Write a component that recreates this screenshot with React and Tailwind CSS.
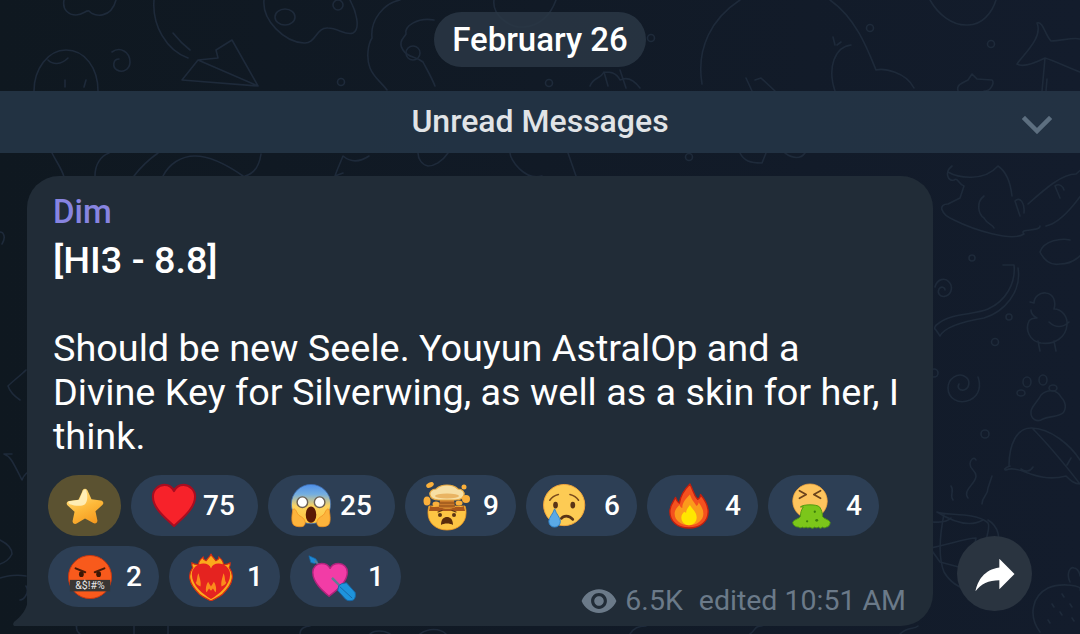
import React from "react";

function Doodles() {
  return (
    <svg className="absolute inset-0" width="1080" height="634" viewBox="0 0 1080 634" fill="none" stroke="#1e2a3a" strokeWidth="1.6" strokeLinecap="round" strokeLinejoin="round">
      {/* left and top */}
      <path d="M64 0c-2 10 5 15 12 15 7 0 10-5 13 -4 5 6 22 8 27-11" />
      <path d="M154 0c-2 25 12 50 34 58M173 33c4 5 8 10 17 17" />
      <path d="M182 80l16-20 20 -2-2-8 16-10 26 46zM198 60l60 26" />
      <path d="M264 0c-2 20 20 42 40 43 12 1 12-16 24-15 10 0 18 8 25 5 8-4 3-22-3-33" />
      <ellipse cx="285" cy="17" rx="10" ry="8" />
      <circle cx="338" cy="5" r="5" />
      <path d="M34 91c0-22 14-41 32-41 19 0 32 18 32 41M48 60c5 5 13 5 20-2M65 80v7M86 80l-2 7" />
      <path d="M112 52c8-6 18 0 18 10 0 8-8 11-13 8-5-3-4-11 2-11" />
      <circle cx="341" cy="82" r="3.5" />
      <path d="M400 0c-16 3-30 20-28 38 -4 6-6 20-2 30 4 10 12 15 17 22" />
      <path d="M434 20c-16-3-30 6-28 14 -3 5-8 8-3 16 5 8 12 6 20 12 3 6 8 14 12 24" />
      <circle cx="413" cy="53" r="7" />
      <path d="M494 0c-2 14 14 28 30 27 14-1 26-10 32-27" />
      <circle cx="549" cy="83" r="3.5" />
      <path d="M590 86c4-10 10-6 14-14 6 0 12 0 16 8 8-4 14 0 20 8M604 72l4 14M620 70l6 18" />
      <circle cx="651" cy="38" r="3.5" />
      {/* right top */}
      <path d="M740 0c-28 18-44 48-38 84M830 0c26 18 38 50 46 70 8-2 30 2 38 18" />
      <path d="M835 91c-8-24 0-44 16-46M835 45l-2-8M837 45l4-3M752 91l-6-13M775 91l-14-13-6 2" />
      <circle cx="870" cy="28" r="3.5" />
      <circle cx="991" cy="44" r="3.5" />
      <path d="M930 0c8 14 22 26 38 25 14 0 24-12 28-25" />
      <path d="M958 91c-2-6 4-8 10-11l4-6 5 5 15 1c3 3-2 12-8 11" />
      <path d="M1037 23c6 14-12 30-20 41 6 4 20-2 28-6l-3 33M1037 23c6-2 8 12 14 18 10 0 22-4 29-2M1045 58c10 3 24 10 35 14M1046 91l1-12" />
      {/* under the bar */}
      <path d="M52 153c5 10 10 16 12 24M95 176c0-12 6-20 14-23M134 176c6-8 14-16 24-23M163 176c6-12 18-20 32-20 14 0 28 6 48 20M245 176c8-2 14-8 16-22" />
      <path d="M335 176c2-6 4-10 8-20 6 5 14 8 26 0M335 176l8-3" />
      <path d="M418 153c0 6 4 12 10 13 6 0 14-4 20-13M510 153c0 6 14 28 32 23M568 153l8 23M740 153c4 8 10 10 22 10l4-10M785 153c8 6 16 6 20 0" />
      <circle cx="689" cy="157" r="3.5" />
      {/* right column */}
      <path d="M952 166c-8 6-4 16 2 14 4-3 4 4 10 6l-4 12-12 6c-10 0-8 10 6 16 20 10 58 22 70 14-6-6 16-2 16-8" />
      <path d="M948 172c10 6 36 10 50-6 6 4 12 12 14 30M984 196c-8 6-6 18 0 22 3 6 8 6 10 10" />
      <path d="M1046 226c18-4 36-30 58-66 -8-6-16 4-28 14-14 0-30 14-48 30" />
      <path d="M1070 240c-8-2-26 0-30 12 4 8 10 14 20 12 14 0 24-10 26-18M1060 198l-5-12c4-3 8 0 9 4M1020 216l-5-15c5-5 10 2 9 12" />
      <circle cx="972" cy="258" r="3" />
      <path d="M935 287c2-8 10-10 14-5 4 4 3 12-3 14-6 2-9-3-7-7 2-3 6-2 6 1" />
      <path d="M1003 265c4 0 6 0 11 0 2 18-8 36-26 44-14 6-36 4-49 14 -5 3-5 6-3 7l4 6c4-8 20-14 44-18 20-6 38-26 34-50" />
      <path d="M1030 302l4 1c0-6 6-11 12-10 8 1 10 9 8 16 8 0 14 8 13 16-1 12-12 20-26 18-12-2-16-14-12-22 2-3 5-3 8-3 -4-2-6-4-6-8M1038 341l2 10M1054 341l2 10M1049 322c6 6 14 6 20 0" />
      <circle cx="1009" cy="317" r="3" />
      <circle cx="995" cy="342" r="3.5" />
      <circle cx="934" cy="373" r="4" />
      <path d="M978 377c3 8 2 18-8 23-12 5-22-2-22-12 0-10 10-15 16-12 7 3 6 12 0 14-5 1-7-3-5-6" />
      <path d="M1041 395c6-6 16-6 20 2 6 6 6 16-2 18-6 2-12 2-16 4-6 4-12 0-12-6-1-6 6-10 10-18z" />
      <ellipse cx="1027" cy="382" rx="4" ry="5" />
      <ellipse cx="1043" cy="380" rx="4" ry="5" />
      <ellipse cx="1053" cy="388" rx="4" ry="3" />
      <ellipse cx="1021" cy="393" rx="4" ry="3" />
      <circle cx="985" cy="434" r="4" />
      <path d="M1009 466c0-22 8-38 22-38 20 0 40 18 49 32M1010 466c-6 2-6 4-4 4 14-6 30 14 60 6 4 4 8 8 14 8M1021 469c4 3 9 3 12-2M1032 428c14 14 34 38 48 56M1067 465l4-7" />
      <path d="M953 500c-4-6 2-8-2-14M968 498c-6-8 8-14 8-22 0-6-6-6-6-12 0-4 4-8 6-4M982 504c0-8 6-8 6-16l4-12" />
      <path d="M937 512c10 4 36 0 50 10 4 2 0 14-4 30M937 512c16 10 32 16 46 8M988 520c10 6 14 18 8 34M944 514c-6 30-4 48 0 58 6 10 14 16 26 18" />
      <path d="M913 520c10 0 30 6 38 -2M930 548c14-2 36-10 46-10l-6 32-30 -8z" />
      <path d="M1040 632c-12-16-8-36 8-44 14-6 36-2 32 2M1070 582c-4-8 0-16 4-14 4 0 6 6 6 8" />
      <path d="M1052 604l2 3M1062 594l2 3M1060 612l2 3M1070 604l2 3M1048 620l2 3M1072 618l2 3" />
      <circle cx="995" cy="596" r="4" />
      {/* bottom and left edge */}
      <path d="M20 400c-6-4-10-8-12-14 6-6 12-10 18-16M4 454c6 2 8 6 18 26 2-6 6-8 10-10M4 454h8M0 540c8 4 12 8 12 14-2 4-6 8-12 10M0 578c8-2 16-4 26-2" />
      <path d="M80 634c-6-4-2-8-4-8M134 634v-8M168 634v-8M300 634c0-6 6-8 10-8M370 634c4-4 14-4 20 0M420 634c8-6 20-6 26 0M630 634c4-6 8-8 16-8M750 634c6-4 4-8 12-8M900 634c8-8 14-4 18-8" />
      <path d="M0 232c4 0 6 6 2 12M20 600c4 0 10-8 6-14" />
    </svg>
  );
}

function Star() {
  return (
    <svg viewBox="0 0 48 48" className="w-[46px] h-[46px]">
      <defs>
        <linearGradient id="starFill" x1="0.2" y1="0" x2="0.7" y2="1">
          <stop offset="0" stopColor="#ffe48a" />
          <stop offset="0.55" stopColor="#fdb93a" />
          <stop offset="1" stopColor="#f59a1f" />
        </linearGradient>
      </defs>
      <path d="M24 6c1.500 0 2.500 1 3 2.500l3.800 8.500 9.700 1.200c2.700.4 3.500 3 1.600 4.800l-7.200 6.500 2 9.300c.5 2.500-2 4.200-4.200 3L24 37l-8.700 5.300c-2.200 1.200-4.700-.5-4.200-3l2-9.300-7.200-6.500c-1.900-1.800-1.100-4.400 1.600-4.800l9.700-1.200 3.800-8.500C21.500 7 22.500 6 24 6z" fill="url(#starFill)" />
      <path d="M24 7c-1 0-2 1-2.500 2L18 17.500l-10.500 1.600c-1.500.5-1 2 .5 3 5 1.500 12 3 16 0 3-3 3-9 1-15z" fill="#fff3c4" opacity="0.85" />
    </svg>
  );
}

function Heart() {
  return (
    <svg viewBox="0 0 48 48" className="w-[46px] h-[46px]">
      <path d="M24 45C16 37 2 27 2 14 2 7 8 2 14 2c4.500 0 8 2 10 6.500C26 4 29.500 2 34 2c6 0 12 5 12 12 0 13-14 23-22 31z" fill="#f7222a" stroke="#a80d20" strokeWidth="2.200" strokeLinejoin="round" />
    </svg>
  );
}

function Scream() {
  return (
    <svg viewBox="0 0 48 48" className="w-[46px] h-[46px]">
      <defs>
        <linearGradient id="screamFace" x1="0" y1="0" x2="0" y2="1">
          <stop offset="0" stopColor="#4f8fe8" />
          <stop offset="0.25" stopColor="#74aee0" />
          <stop offset="0.55" stopColor="#fdd35e" />
          <stop offset="1" stopColor="#fdc43c" />
        </linearGradient>
      </defs>
      <circle cx="24" cy="22" r="20.500" fill="url(#screamFace)" stroke="#3f6fb5" strokeWidth="0.800" />
      <circle cx="15" cy="20" r="5.500" fill="#fff" stroke="#6d6154" strokeWidth="1.500" />
      <circle cx="33" cy="20" r="5.500" fill="#fff" stroke="#6d6154" strokeWidth="1.500" />
      <ellipse cx="24" cy="33" rx="5.500" ry="8.500" fill="#5a1a05" />
      <path d="M5 28c-1 6-2 13 1 16 3 2 8 2 10 1 3-2 2-6 0-8-3-3-4-2-6-5-1-2-3-7-5-4z" fill="#fdb43c" stroke="#f08e1f" strokeWidth="0.800" />
      <path d="M43 28c1 6 2 13-1 16-3 2-8 2-10 1-3-2-2-6 0-8 3-3 4-2 6-5 1-2 3-7 5-4z" fill="#fdb43c" stroke="#f08e1f" strokeWidth="0.800" />
    </svg>
  );
}

function Exploding() {
  return (
    <svg viewBox="0 0 52 50" className="w-[52px] h-[50px]">
      <path d="M8 25c-1 3-1 6-1 7 0 10 8 17 19 17s19-7 19-17c0-2 0-4-1-7z" fill="#fdc544" stroke="#f59a1f" strokeWidth="0.800" />
      <path d="M9 25c4 2 8 0 10 1 3 2 12 2 15 0 3-1 6 1 9-1l1 5H8z" fill="#a8561b" />
      <path d="M19 19h14l1 8H18z" fill="#c9792a" />
      <path d="M18 22h16M18 25h16" stroke="#8a4a16" strokeWidth="1.200" />
      <path d="M26 4c-6 0-9 2-11 4-4 0-7 3-6 6 1 4 6 5 9 5h16c3 0 8-1 9-5 1-3-2-6-6-6-2-2-5-4-11-4z" fill="#f7dfa4" stroke="#e8a940" strokeWidth="1.200" />
      <ellipse cx="26" cy="15" rx="12" ry="2.500" fill="#e9b463" />
      <ellipse cx="6" cy="20" rx="3.500" ry="4.500" fill="#fbb03b" />
      <ellipse cx="15" cy="23" rx="3.500" ry="2.500" fill="#fbb03b" />
      <ellipse cx="45" cy="18" rx="4" ry="4" fill="#fbb03b" />
      <ellipse cx="38" cy="22" rx="3.500" ry="2.500" fill="#fbb03b" />
      <ellipse cx="9" cy="4" rx="4" ry="2.500" fill="#fbb03b" transform="rotate(-25 9 4)" />
      <circle cx="43" cy="6" r="2.500" fill="#fbb03b" />
      <circle cx="19" cy="34" r="2" fill="#5a3416" />
      <circle cx="33" cy="34" r="2" fill="#5a3416" />
      <path d="M17 31l4-1.500M35 31l-4-1.500" stroke="#5a3416" strokeWidth="1.200" strokeLinecap="round" />
      <path d="M20 44c0-6 3-8 6-8s6 2 6 8c-3-2-9-2-12 0z" fill="#5a2c0c" />
    </svg>
  );
}

function Crying() {
  return (
    <svg viewBox="4 0 48 48" className="w-[46px] h-[46px] overflow-visible">
      <circle cx="24" cy="23" r="21.500" fill="#fdcb54" stroke="#f2a33a" strokeWidth="1" />
      <path d="M9 18c2-3 5-5 9-6M39 18c-2-3-5-5-9-6" stroke="#7a4a1c" strokeWidth="1.600" fill="none" strokeLinecap="round" />
      <ellipse cx="15" cy="23" rx="2.500" ry="3.500" fill="#5a3416" />
      <ellipse cx="33" cy="23" rx="2.500" ry="3.500" fill="#5a3416" />
      <path d="M21 37c2-3 8-4 12 1" stroke="#5a3416" strokeWidth="2.800" fill="none" strokeLinecap="round" />
      <path d="M14 27c-2 6-6 9-6 13 0 4 3 6 6 6s6-2 6-6c0-4-4-7-6-13z" fill="#5aa9e6" stroke="#2f82c8" strokeWidth="1" />
    </svg>
  );
}

function Fire() {
  return (
    <svg viewBox="0 0 48 48" className="w-[46px] h-[46px]">
      <path d="M25 1c4 8 4 12 8 16 2-1 3-3 3-5 5 6 8 12 8 18 0 10-8 17-20 17S4 40 4 30c0-7 4-11 6-15 1 3 2 5 4 6 1-8 5-14 11-20z" fill="#f4511e" stroke="#c41e0e" strokeWidth="1.400" strokeLinejoin="round" />
      <path d="M25 12c2 6 5 9 7 12 1-1 2-2 2-4 3 4 5 8 5 12 0 7-7 12-15 12S9 39 9 32c0-4 3-7 5-9 1 2 2 3 3 3 0-6 4-10 8-14z" fill="#fb9a1c" />
      <path d="M25 23c2 4 7 7 7 13 0 5-4 8-8 8s-8-3-8-8c0-3 2-5 3-6 1 1 2 1 2 1 0-3 2-5 4-8z" fill="#ffe600" />
    </svg>
  );
}

function Vomit() {
  return (
    <svg viewBox="0 0 48 50" className="w-[46px] h-[48px]">
      <circle cx="24" cy="20" r="18" fill="#fdc45e" stroke="#f2a33a" strokeWidth="0.800" />
      <path d="M13 9l7 4-7 4M35 9l-7 4 7 4" stroke="#6b431c" strokeWidth="1.800" fill="none" strokeLinecap="round" strokeLinejoin="round" />
      <path d="M14 26c3-3 17-3 20 0 2 3 3 6 3 10 2 3 7 3 8 6 0 3-2 5-4 5-1 1-3 1-4 0-2 2-3 1-4 0-2 1-3 1-4 0-2 2-4 1-5 0-2 1-3 1-4 0-2 1-3 1-4 0-1 1-3 1-4 0-3 0-6-2-6-5 1-3 6-3 8-6 0-4 1-7 3-10z" fill="#7cc61a" stroke="#4f9a10" strokeWidth="1" strokeLinejoin="round" />
      <circle cx="29" cy="31" r="1.200" fill="#3c7d0c" />
      <circle cx="21" cy="41" r="1.200" fill="#3c7d0c" />
      <circle cx="31" cy="40" r="1.500" fill="#3c7d0c" />
    </svg>
  );
}

function Cursing() {
  return (
    <svg viewBox="0 0 48 48" className="w-[46px] h-[46px]">
      <circle cx="24" cy="24" r="22.500" fill="#f85a1c" stroke="#c9360f" strokeWidth="1" />
      <path d="M9 15l10 4M39 15l-10 4" stroke="#4a1c08" strokeWidth="2.200" strokeLinecap="round" />
      <ellipse cx="15" cy="21" rx="2.500" ry="3" fill="#3c1604" />
      <ellipse cx="33" cy="21" rx="2.500" ry="3" fill="#3c1604" />
      <rect x="3" y="27" width="42" height="12" fill="#3a3633" />
      <text x="24" y="37" textAnchor="middle" fontSize="11" fill="#e8e8e8" fontFamily="Roboto, sans-serif">&amp;$!#%</text>
    </svg>
  );
}

function FireHeart() {
  return (
    <svg viewBox="0 0 48 50" className="w-[46px] h-[48px]">
      <path d="M24 1c1 3 3 4 5 7 2-1 4-2 3-4 4 3 5 6 5 8 3 0 5 0 7-2 0 2 0 4-1 5 2 3 4 8 3 12-1 7-6 12-10 16-4 3-8 5-12 7-4-2-8-4-12-7-4-4-9-9-10-16-1-4 1-9 3-12-1-1-1-3-1-5 2 2 4 2 7 2 0-2 1-5 5-8-1 2 1 3 3 4 2-3 4-4 5-7z" fill="#fbaa1c" stroke="#d62c12" strokeWidth="1.200" strokeLinejoin="round" />
      <path d="M24 48C16 43 4 34 4 22c0-6 6-11 12-11 4 0 7 2 8 5 1-3 4-5 8-5 6 0 12 5 12 11 0 12-12 21-20 26z" fill="#e52320" />
      <path d="M8 31c2-2 1-7 3-10 1 5 3 9 2 14-2-1-4-2-5-4zM40 31c-2-2-1-7-3-10-1 5-3 9-2 14 2-1 4-2 5-4zM19 41c-1-4 0-8 2-11 1 2 2 3 3 5 1-2 2-3 3-5 2 3 3 7 2 11-1 0-2-3-3-4-1 1-1 2-2 2-1 0-1-1-2-2-1 1-2 4-3 4z" fill="#fb8c1c" />
    </svg>
  );
}

function ArrowHeart() {
  return (
    <svg viewBox="0 0 52 52" className="w-[50px] h-[50px]">
      <path d="M9 7l-7-3 2 7 4 1 3-2z" fill="#1e88d6" stroke="#1668a8" strokeWidth="0.800" />
      <path d="M8 9l7 7" stroke="#5b7f95" strokeWidth="2" />
      <path d="M23 46C17 41 6 32 6 21c0-5 4-9 9-9 4 0 7 1 9 5 2-4 5-5 9-5 5 0 9 4 9 9 0 11-13 20-19 25z" fill="#f23ca6" stroke="#b0227c" strokeWidth="1.500" strokeLinejoin="round" />
      <path d="M26 27l12 12" stroke="#5b7f95" strokeWidth="2.500" />
      <path d="M36 33l5-1 9 10c1 3 0 7-2 8-3 1-6 1-8-1l-8-9 1-5z" fill="#1e94dc" stroke="#1668a8" strokeWidth="1" strokeLinejoin="round" />
      <path d="M34 36l13 12" stroke="#1668a8" strokeWidth="1" />
    </svg>
  );
}

function Reaction({ icon, count, wide }) {
  return (
    <div className={wide ? "flex items-center h-[61px] w-[127px] rounded-full bg-[#2d3f55] pl-[20px]" : "flex items-center h-[61px] w-[111px] rounded-full bg-[#2d3f55]"}>
      <div className={wide ? "flex w-[46px] justify-center" : "flex w-[78px] justify-center pl-[6px]"}>{icon}</div>
      <span className={wide ? "ml-[6px] text-[28px] font-medium text-white" : "text-[28px] font-medium text-white"}>{count}</span>
    </div>
  );
}

export default function App() {
  return (
    <div className="relative flex h-[634px] w-[1080px] flex-col overflow-hidden bg-linear-to-r from-[#0f1820] to-[#131c2c] pt-3 font-['Roboto',sans-serif]">
      <Doodles />

      <div className="relative flex h-[55px] w-[212px] items-center justify-center self-center rounded-full bg-[#2a3745]/85 text-[33px] font-medium text-white">
        February 26
      </div>

      <div className="relative mt-6 flex h-[62px] items-center justify-center bg-[#243444]/95 pb-[2px] text-[32px] font-medium text-[#e1e4e7]">
        Unread Messages
        <svg className="absolute right-[28px] top-[25px]" width="30" height="18" viewBox="0 0 30 18" fill="none" stroke="#5d6f80" strokeWidth="4.500" strokeLinecap="square">
          <path d="M3 3l12 12L27 3" />
        </svg>
      </div>

      <div className="relative mt-[23px] flex items-end pl-[27px]">
        <div className="relative h-[450px] w-[906px] rounded-[32px] rounded-bl-none bg-[#212c37] pl-[21px] pt-[17px]">
          <svg className="absolute bottom-0 left-[-14px]" width="15" height="30" viewBox="0 0 15 30" fill="#212c37">
            <path d="M15 0v30H2C0 30-.5 28 1 26 8 20 15 14 15 0z" />
          </svg>

          <div className="pl-[5px] text-[33px] font-medium leading-[38px] text-[#8784e0]">Dim</div>
          <div className="mt-[7px] pl-[5px] text-[37.8px] leading-[44px] text-white">
            <span className="font-medium">[HI3 - 8.8]</span>
            <br />
            <br />
            Should be new Seele. Youyun AstralOp and a
            <br />
            Divine Key for Silverwing, as well as a skin for her, I
            <br />
            think.
          </div>

          <div className="mt-[17px] flex gap-[10px]">
            <div className="flex h-[61px] w-[73px] items-center justify-center rounded-full bg-[#5b5231]">
              <Star />
            </div>
            <Reaction wide icon={<Heart />} count="75" />
            <Reaction wide icon={<Scream />} count="25" />
            <Reaction icon={<Exploding />} count="9" />
            <Reaction icon={<Crying />} count="6" />
            <Reaction icon={<Fire />} count="4" />
            <Reaction icon={<Vomit />} count="4" />
          </div>

          <div className="mt-[10px] flex items-end gap-[10px] pr-[27px]">
            <Reaction icon={<Cursing />} count="2" />
            <Reaction icon={<FireHeart />} count="1" />
            <Reaction icon={<ArrowHeart />} count="1" />
            <div className="ml-auto mb-[-13px] flex items-center text-[28.5px] leading-[36px] text-[#6b7a89]">
              <svg className="mr-[7px] h-[38px] w-[38px]" viewBox="0 0 24 24" fill="#6b7a89">
                <path d="M12 4.500C7 4.500 2.730 7.610 1 12c1.730 4.390 6 7.500 11 7.500s9.270-3.110 11-7.500c-1.730-4.390-6-7.500-11-7.500zM12 17c-2.760 0-5-2.240-5-5s2.240-5 5-5 5 2.240 5 5-2.240 5-5 5zm0-8c-1.660 0-3 1.340-3 3s1.340 3 3 3 3-1.340 3-3-1.340-3-3-3z" />
              </svg>
              <span>6.5K</span>
              <span className="ml-[16px]">edited 10:51 AM</span>
            </div>
          </div>
        </div>

        <div className="mb-[15px] ml-[24px] flex h-[75px] w-[75px] items-center justify-center rounded-full bg-[#2a3440]">
          <svg className="h-[52px] w-[52px]" viewBox="0 0 24 24" fill="#fff">
            <path d="M14 9V5l7 7-7 7v-4.100c-5 0-8.500 1.600-11 5.100 1-5 4-10 11-11z" />
          </svg>
        </div>
      </div>
    </div>
  );
}
